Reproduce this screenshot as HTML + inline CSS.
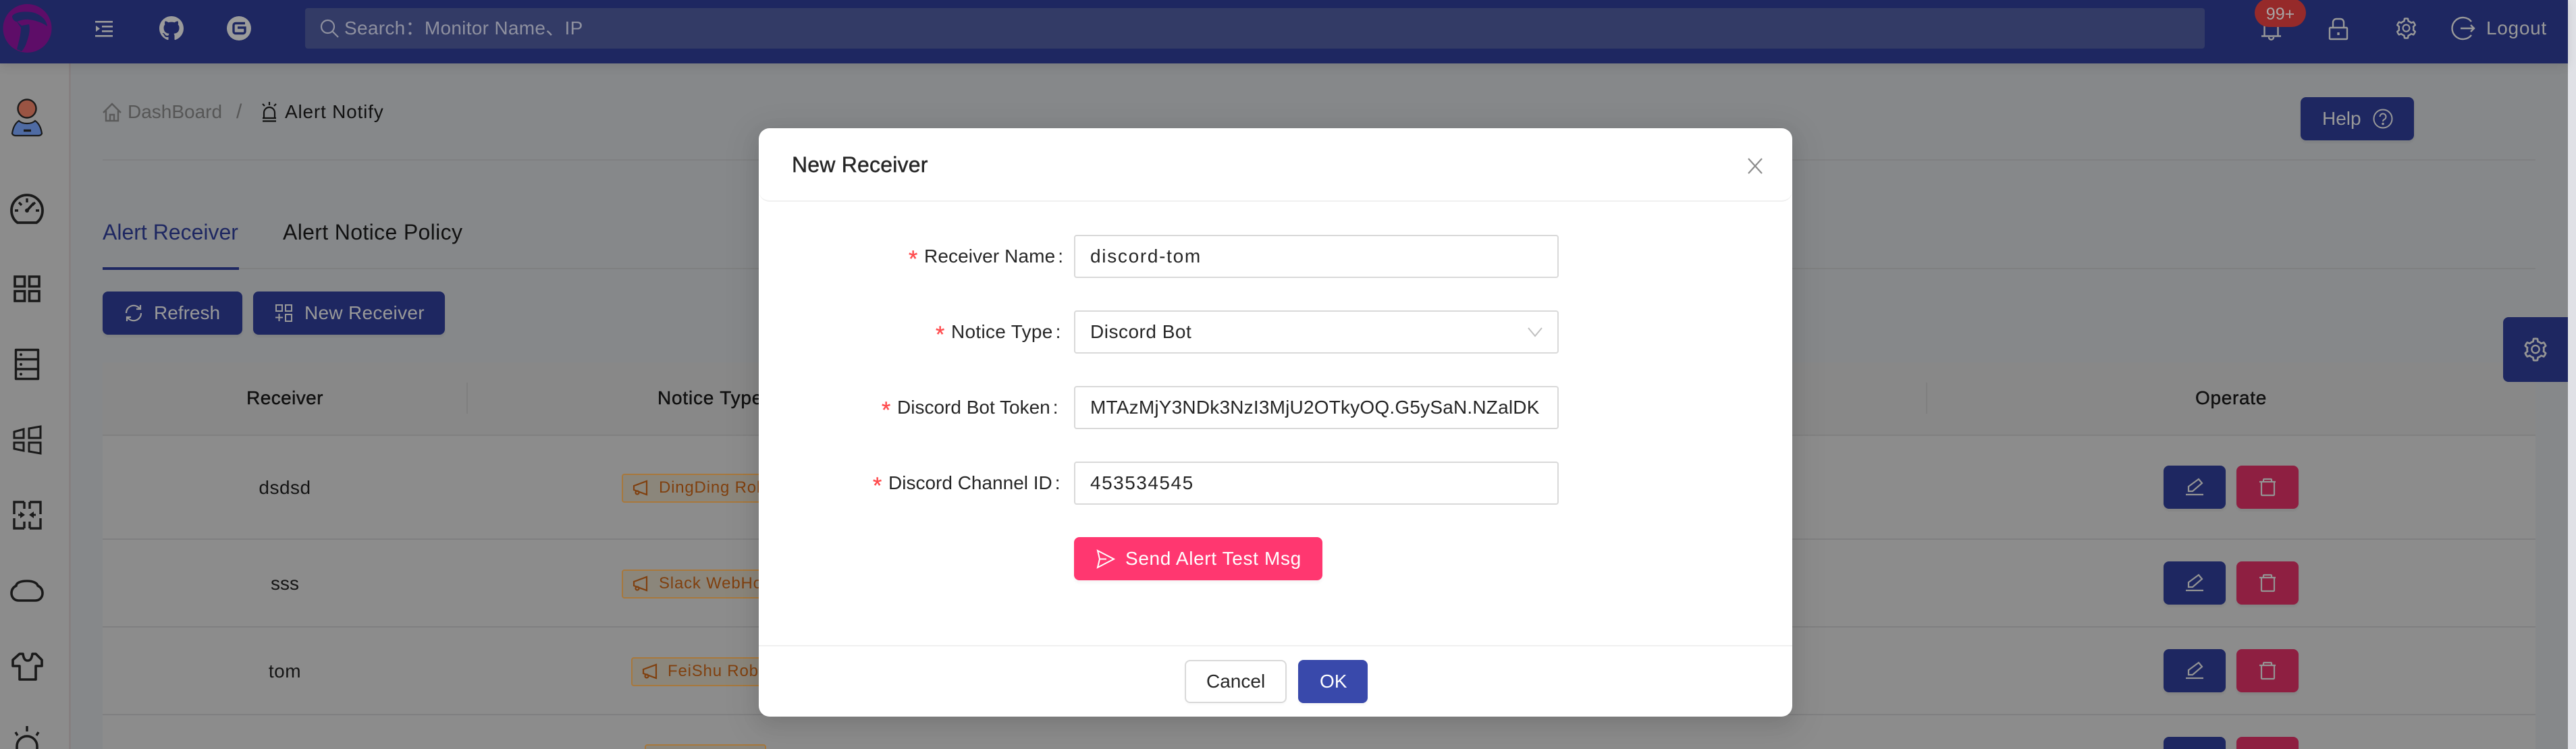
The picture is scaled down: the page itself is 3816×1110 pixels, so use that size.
<!DOCTYPE html>
<html><head><meta charset="utf-8"><title>Alert Notify</title>
<style>
html,body{margin:0;padding:0;width:3816px;height:1110px;overflow:hidden;background:#86888a}
body{position:relative;font-family:"Liberation Sans","Noto Sans CJK SC",sans-serif;font-size:28px}
div,svg{position:absolute;box-sizing:border-box}
.t{position:absolute;white-space:nowrap;line-height:40px;height:40px;font-size:28px}
.m{-webkit-text-stroke:.45px currentColor}
.c{transform:translateX(-50%)}
.line{background:#7f7f80;height:2px}
.blue{background:#1e2761;border-radius:8px;box-shadow:0 3px 3px rgba(0,0,0,.06)}
.red{background:#8e1f41;border-radius:8px;box-shadow:0 3px 3px rgba(0,0,0,.06)}
.tag{background:#8b867b;border:2px solid #a8783c;border-radius:4px;height:43px;width:300px}
.tt{color:#80400f;font-size:24px;letter-spacing:.8px}
.inp{left:1591px;width:718px;height:64px;background:#fff;border:2px solid #d9d9d9;border-radius:4px}
.v{color:#262626}
.star{color:#ff4d4f;font-size:34px;-webkit-text-stroke:.4px #ff4d4f}
.lab{color:#262626}
</style></head><body>

<!-- page areas -->
<div style="left:0;top:94px;width:102px;height:1016px;background:#8c8c8c"></div>
<div style="left:102px;top:94px;width:3px;height:1016px;background:#857f80"></div>
<div style="left:105px;top:94px;width:3699px;height:1016px;background:#86888a"></div>
<div style="left:3804px;top:0;width:12px;height:1110px;background:#e0e1e6"></div>

<!-- breadcrumb -->
<svg style="left:150px;top:150px" width="32" height="32" viewBox="0 0 32 32" fill="none" stroke="#5a5a5a" stroke-width="2.4"><path d="M3 17 16 4l13 13M7 14v15h18V14M13 29v-9h6v9"/></svg>
<div class="t" style="left:189px;top:146px;color:#565656">DashBoard</div>
<div class="t" style="left:350px;top:146px;color:#565656;font-size:30px">/</div>
<svg style="left:386px;top:150px" width="26" height="32" viewBox="0 0 26 32" fill="none" stroke="#111" stroke-width="2.2"><path d="M13 1v5M3 4l3 3M23 4l-3 3M5 25V17a8 8 0 0 1 16 0v8M3 25h20M3 29.500h20"/></svg>
<div class="t" style="left:422px;top:146px;color:#111;letter-spacing:.8px">Alert Notify</div>
<div class="line" style="left:152px;top:236px;width:3604px;background:#7f8082"></div>
<div class="blue" style="left:3408px;top:144px;width:168px;height:64px"></div>
<div class="t" style="left:3440px;top:156px;color:#999">Help</div>
<svg style="left:3515px;top:161px" width="30" height="30" viewBox="0 0 30 30" fill="none" stroke="#999" stroke-width="2"><circle cx="15" cy="15" r="13.500"/><path d="M10.500 12a4.500 4.500 0 1 1 6.500 4c-1.500.8-2 1.500-2 3"/><circle cx="15" cy="22.500" r=".8" fill="#999"/></svg>

<!-- tabs -->
<div class="t" style="left:152px;top:324px;color:#1e2761;font-size:32px">Alert Receiver</div>
<div class="t" style="left:419px;top:324px;color:#111;font-size:32px;letter-spacing:.35px">Alert Notice Policy</div>
<div style="left:152px;top:397px;width:3604px;height:2px;background:#7f8081"></div>
<div style="left:152px;top:396px;width:202px;height:4px;background:#1e2761"></div>

<div class="blue" style="left:152px;top:432px;width:207px;height:64px"></div>
<svg style="left:183px;top:449px" width="30" height="30" viewBox="0 0 30 30" fill="none" stroke="#999" stroke-width="2.2"><path d="M4 15A11 11 0 0 1 24 8.500M26 15A11 11 0 0 1 6 21.500"/><path d="M25 3v6h-6M5 27v-6h6"/></svg>
<div class="t" style="left:228px;top:444px;color:#999">Refresh</div>
<div class="blue" style="left:375px;top:432px;width:284px;height:64px"></div>
<svg style="left:407px;top:450px" width="28" height="28" viewBox="0 0 28 28" fill="none" stroke="#999" stroke-width="2"><path d="M2 2h9v9H2zM16 2h9v9h-9zM16 16h9v10h-9zM6.500 15v11M1 20.500h11"/></svg>
<div class="t" style="left:451px;top:444px;color:#999;letter-spacing:.3px">New Receiver</div>

<!-- table -->
<div style="left:152px;top:537px;width:3604px;height:108px;background:#888888"></div>
<div style="left:152px;top:645px;width:3604px;height:465px;background:#8c8c8c"></div>
<div style="left:691px;top:567px;width:2px;height:46px;background:#7f7f7f"></div>
<div style="left:2853px;top:567px;width:2px;height:46px;background:#7f7f7f"></div>
<div class="line" style="left:152px;top:644px;width:3604px;background:#808080"></div>
<div class="line" style="left:152px;top:798px;width:3604px"></div>
<div class="line" style="left:152px;top:928px;width:3604px"></div>
<div class="line" style="left:152px;top:1058px;width:3604px"></div>
<div class="t c m" style="left:422px;top:570px;color:#111;letter-spacing:.4px">Receiver</div>
<div class="t m" style="left:974px;top:570px;color:#111;letter-spacing:.8px">Notice Type</div>
<div class="t c m" style="left:3305px;top:570px;color:#111;letter-spacing:.7px">Operate</div>
<div class="t c" style="left:422px;top:703px;color:#151515;letter-spacing:.5px">dsdsd</div>
<div class="t c" style="left:422px;top:845px;color:#151515">sss</div>
<div class="t c" style="left:422px;top:975px;color:#151515;letter-spacing:.5px">tom</div>

<div class="tag" style="left:921px;top:702px"></div>
<div class="t tt" style="left:976px;top:703px">DingDing Robot</div>
<div class="tag" style="left:921px;top:844px"></div>
<div class="t tt" style="left:976px;top:845px">Slack WebHook</div>
<div class="tag" style="left:935px;top:974px"></div>
<div class="t tt" style="left:989px;top:975px">FeiShu Robot</div>
<div class="tag" style="left:955px;top:1103px;width:180px"></div>
<svg style="left:936px;top:711px" width="26" height="26" viewBox="0 0 26 26" fill="none" stroke="#80400f" stroke-width="2.200"><path d="M22 2v20L3 15V9z"/><circle cx="8" cy="19" r="2.500"/></svg>
<svg style="left:936px;top:853px" width="26" height="26" viewBox="0 0 26 26" fill="none" stroke="#80400f" stroke-width="2.200"><path d="M22 2v20L3 15V9z"/><circle cx="8" cy="19" r="2.500"/></svg>
<svg style="left:950px;top:983px" width="26" height="26" viewBox="0 0 26 26" fill="none" stroke="#80400f" stroke-width="2.200"><path d="M22 2v20L3 15V9z"/><circle cx="8" cy="19" r="2.500"/></svg>

<!-- row actions -->
<div class="blue" style="left:3205px;top:690px;width:92px;height:64px"></div>
<div class="red" style="left:3313px;top:690px;width:92px;height:64px"></div>
<div class="blue" style="left:3205px;top:832px;width:92px;height:64px"></div>
<div class="red" style="left:3313px;top:832px;width:92px;height:64px"></div>
<div class="blue" style="left:3205px;top:962px;width:92px;height:64px"></div>
<div class="red" style="left:3313px;top:962px;width:92px;height:64px"></div>
<div class="blue" style="left:3205px;top:1092px;width:92px;height:64px"></div>
<div class="red" style="left:3313px;top:1092px;width:92px;height:64px"></div>
<svg style="left:0;top:0" width="3816" height="1110" fill="none" stroke="#949494" stroke-width="2.200">
 <g><path d="M3238 733h26M3242 728v-7l15-11 5 6-14 12z"/><path d="M3347 714h24M3350 714v19a1 1 0 0 0 1 1h17a1 1 0 0 0 1-1v-19M3353 714v-3a1 1 0 0 1 1-1h10a1 1 0 0 1 1 1v3"/></g>
 <g transform="translate(0,142)"><path d="M3238 733h26M3242 728v-7l15-11 5 6-14 12z"/><path d="M3347 714h24M3350 714v19a1 1 0 0 0 1 1h17a1 1 0 0 0 1-1v-19M3353 714v-3a1 1 0 0 1 1-1h10a1 1 0 0 1 1 1v3"/></g>
 <g transform="translate(0,272)"><path d="M3238 733h26M3242 728v-7l15-11 5 6-14 12z"/><path d="M3347 714h24M3350 714v19a1 1 0 0 0 1 1h17a1 1 0 0 0 1-1v-19M3353 714v-3a1 1 0 0 1 1-1h10a1 1 0 0 1 1 1v3"/></g>
</svg>

<!-- floating settings -->
<div style="left:3708px;top:470px;width:96px;height:96px;background:#1e2761;border-radius:8px 0 0 8px"></div>
<svg style="left:3736px;top:498px" width="40" height="40" viewBox="0 0 1024 1024" fill="#949494"><path d="M924.800 625.700l-65.500-56c3.100-19 4.700-38.400 4.700-57.800s-1.600-38.800-4.700-57.800l65.500-56a32.030 32.030 0 0 0 9.300-35.200l-.9-2.600a443.740 443.740 0 0 0-79.700-137.900l-1.800-2.100a32.120 32.120 0 0 0-35.100-9.500l-81.300 28.900c-30-24.600-63.500-44-99.700-57.600l-15.700-85a32.050 32.050 0 0 0-25.800-25.700l-2.700-.5c-52.100-9.400-106.900-9.400-159 0l-2.700.5a32.050 32.050 0 0 0-25.800 25.700l-15.800 85.400a351.860 351.860 0 0 0-99 57.400l-81.900-29.100a32 32 0 0 0-35.100 9.500l-1.800 2.100a446.020 446.020 0 0 0-79.700 137.900l-.9 2.600c-4.500 12.500-.8 26.500 9.300 35.200l66.300 56.600c-3.100 18.800-4.600 38-4.600 57.100 0 19.200 1.500 38.400 4.600 57.100L99 625.500a32.030 32.030 0 0 0-9.300 35.200l.9 2.600c18.100 50.400 44.900 96.900 79.700 137.900l1.800 2.100a32.120 32.120 0 0 0 35.100 9.500l81.900-29.100c29.800 24.500 63.100 43.900 99 57.400l15.800 85.400a32.050 32.050 0 0 0 25.800 25.700l2.700.5a449.400 449.400 0 0 0 159 0l2.700-.5a32.050 32.050 0 0 0 25.800-25.700l15.700-85a350 350 0 0 0 99.700-57.600l81.300 28.900a32 32 0 0 0 35.100-9.500l1.800-2.100c34.800-41.100 61.600-87.500 79.700-137.900l.9-2.600c4.500-12.300.8-26.300-9.300-35zM788.300 465.900c2.500 15.100 3.800 30.600 3.800 46.100s-1.300 31-3.800 46.100l-6.600 40.100 74.700 63.900a370.030 370.030 0 0 1-42.600 73.600L721 702.800l-31.400 25.800c-23.900 19.600-50.500 35-79.300 45.800l-38.100 14.300-17.900 97a377.500 377.500 0 0 1-85 0l-17.900-97.200-37.800-14.500c-28.500-10.800-55-26.200-78.700-45.700l-31.400-25.900-93.400 33.200c-17-22.900-31.200-47.600-42.600-73.600l75.500-64.500-6.500-40c-2.400-14.900-3.700-30.300-3.700-45.500 0-15.300 1.200-30.600 3.700-45.500l6.500-40-75.500-64.500c11.300-26.100 25.600-50.700 42.600-73.600l93.400 33.200 31.400-25.900c23.700-19.500 50.200-34.900 78.700-45.700l37.900-14.300 17.900-97.200c28.100-3.200 56.800-3.200 85 0l17.900 97 38.100 14.300c28.700 10.800 55.400 26.200 79.300 45.800l31.400 25.800 92.800-32.900c17 22.900 31.200 47.600 42.600 73.600L781.800 426l6.500 39.900zM512 326c-97.200 0-176 78.800-176 176s78.800 176 176 176 176-78.800 176-176-78.800-176-176-176zm79.200 255.200A111.600 111.600 0 0 1 512 614c-29.900 0-58-11.700-79.200-32.800A111.600 111.600 0 0 1 400 502c0-29.900 11.700-58 32.800-79.200C454 401.600 482.100 390 512 390c29.900 0 58 11.600 79.200 32.800A111.600 111.600 0 0 1 624 502c0 29.900-11.700 58-32.800 79.200z"/></svg>

<!-- sidebar icons -->
<svg style="left:0;top:94px" width="102" height="1016" viewBox="0 94 102 1016" fill="none" stroke="#1a1a1a" stroke-width="3">
 <circle cx="40" cy="161" r="13.500" fill="#9a5443" stroke-width="2.400"/>
 <path d="M18 198c1-7 4-15 10-19 3 3 7 4 12 4s9-1 12-4c6 4 9 12 10 19-1 2-3 3-5 3H23c-2 0-4-1-5-3z" fill="#4f6ba3" stroke-width="2.200"/>
 <path d="M35 193.500h11" stroke-width="3.400"/>
 <path d="M26 330c-6-4-9-11-9-18a23 23 0 0 1 46 0c0 7-3 14-9 18z" stroke-width="3.800" stroke-linejoin="round"/>
 <path d="M40 294v6M28 300l4 4M52 300l-4 4M22 312h5M53 312h5" stroke-width="3.400"/>
 <path d="M40 312l10-11" stroke-width="3.600"/>
 <circle cx="40" cy="312" r="3" fill="#1a1a1a" stroke="none"/>
 <path d="M22 410h14.500v14.500H22zM43.500 410H58v14.500H43.500zM22 431.500h14.500V446H22zM43.500 431.500H58V446H43.500z" stroke-width="3.600"/>
 <path d="M23.500 518.500h33v43h-33zM23.500 532.500h33M23.500 547h33" stroke-width="3.400" stroke-linejoin="round"/>
 <circle cx="31" cy="525.500" r="2" fill="#1a1a1a" stroke="none"/><circle cx="31" cy="540" r="2" fill="#1a1a1a" stroke="none"/><circle cx="31" cy="554.500" r="2" fill="#1a1a1a" stroke="none"/>
 <path d="M21 640l14-4v13H21zM43 635l17-3v17H43zM21 656h14v12l-14-3zM43 656h17v16l-17-3z" stroke-width="3"/>
 <path d="M36 744H21v18M36 783H21v-15M44 744h16v18M44 783h16v-15M36 744v10M36 783v-10M44 744v10M44 783v-10" stroke-width="3.400"/>
 <path d="M27 763h8M53 763h-8" stroke-width="3"/>
 <path d="M30 758l7 5-7 5zM50 758l-7 5 7 5z" fill="#1a1a1a" stroke="none"/>
 <path d="M28 890c-8 0-11-6-11-11 0-6 3-9 7-11 0-4 6-7 16-7 9 0 15 3 16 7 4 2 7 5 7 11 0 5-3 11-11 11z" stroke-width="3.600"/>
 <path d="M19 978l10-9h5c1 7 3 10 7 10s6-3 7-10h5l9 9v9l-9 0v20H29v-20h-10z" stroke-width="3.600" stroke-linejoin="round"/>
 <path d="M40 1076v8M23 1085l3 5M57 1085l-3 5" stroke-width="3.400"/>
 <path d="M25 1120v-14a15 15 0 0 1 30 0v14" stroke-width="3.600"/>
</svg>

<!-- header -->
<div style="left:0;top:0;width:3804px;height:94px;background:#1e2761;box-shadow:0 4px 14px rgba(0,0,0,.1)"></div>
<svg style="left:0;top:0" width="90" height="94" viewBox="0 0 90 94">
 <circle cx="40.500" cy="42" r="36" fill="#5e0d68"/>
 <path d="M18 24c4-7 22-8 33-5 11 4 18 11 19 20-6-5-18-9-27-10-8-1-14 2-18 3-4 0-7-4-7-8z" fill="#1e2761"/>
 <path d="M24 31l8 7 11-2c2 8 0 17-3 25-2 7-5 12-8 15l-7-3c3-12 6-22 6-32l-7-10z" fill="#1e2761"/>
</svg>
<svg style="left:140px;top:29px" width="28" height="26" viewBox="0 0 28 26" fill="#9b9b9b"><rect x="1" y="2" width="26" height="2.600"/><rect x="11" y="9" width="16" height="2.600"/><rect x="11" y="16" width="16" height="2.600"/><rect x="1" y="23" width="26" height="2.600"/><path d="M2 9l6 4.500-6 4.500z"/></svg>
<svg style="left:236px;top:24px" width="36" height="36" viewBox="0 0 16 16" fill="#9b9b9b"><path d="M8 0C3.580 0 0 3.580 0 8c0 3.540 2.290 6.530 5.470 7.590.4.070.55-.17.55-.38 0-.19-.01-.82-.01-1.490-2.010.37-2.530-.49-2.690-.94-.09-.23-.48-.94-.82-1.130-.28-.15-.68-.52-.01-.53.63-.01 1.080.58 1.230.82.72 1.210 1.870.87 2.330.66.07-.52.28-.87.51-1.070-1.780-.2-3.640-.89-3.640-3.950 0-.87.31-1.590.82-2.150-.08-.2-.36-1.020.08-2.120 0 0 .67-.21 2.200.82.64-.18 1.320-.27 2-.27s1.360.09 2 .27c1.530-1.040 2.200-.82 2.200-.82.44 1.100.16 1.920.08 2.120.51.56.82 1.270.82 2.150 0 3.070-1.870 3.750-3.650 3.950.29.25.54.73.54 1.480 0 1.070-.01 1.930-.01 2.200 0 .21.15.46.55.38A8.010 8.010 0 0 0 16 8c0-4.420-3.580-8-8-8z"/></svg>
<svg style="left:336px;top:24px" width="36" height="36" viewBox="0 0 36 36"><circle cx="18" cy="18" r="18" fill="#9b9b9b"/><path d="M27 10.500H13a3 3 0 0 0-3 3v9a3 3 0 0 0 3 3h11a3 3 0 0 0 3-3V17H16" fill="none" stroke="#1e2761" stroke-width="3.400"/></svg>

<div style="left:452px;top:12px;width:2814px;height:60px;background:#333b66;border-radius:4px"></div>
<svg style="left:474px;top:28px" width="28" height="28" viewBox="0 0 28 28" fill="none" stroke="#8e909f" stroke-width="2.200"><circle cx="11.500" cy="11.500" r="9.500"/><path d="M18.500 18.500 27 27"/></svg>
<div class="t" style="left:510px;top:22px;color:#8e909f;letter-spacing:.3px">Search：Monitor Name、IP</div>

<!-- header right -->
<svg style="left:3348px;top:28px" width="34" height="32" viewBox="0 0 34 32" fill="none" stroke="#999" stroke-width="2.400"><path d="M2 25.500h29M6.500 25V6M26.500 25V6M13 27c0 5 7 5 7 0"/></svg>
<div style="left:3340px;top:-2px;width:76px;height:42px;border-radius:21px;background:#962a2a"></div>
<div class="t c" style="left:3378px;top:1px;color:#a9a5a5;font-size:25px">99+</div>
<svg style="left:3449px;top:26px" width="30" height="34" viewBox="0 0 30 34" fill="none" stroke="#999" stroke-width="2.400"><rect x="2" y="15" width="26" height="17" rx="1"/><path d="M7 15V7a5 5 0 0 1 5-5h6a5 5 0 0 1 5 5v8"/><path d="M15 22v4" stroke-width="3.400"/></svg>
<svg style="left:3547px;top:24px" width="35" height="36" viewBox="0 0 1024 1024" preserveAspectRatio="none" fill="#999"><path d="M924.800 625.700l-65.500-56c3.100-19 4.700-38.400 4.700-57.800s-1.600-38.800-4.700-57.800l65.500-56a32.030 32.030 0 0 0 9.300-35.200l-.9-2.600a443.740 443.740 0 0 0-79.700-137.900l-1.800-2.100a32.120 32.120 0 0 0-35.100-9.500l-81.300 28.900c-30-24.600-63.500-44-99.700-57.600l-15.700-85a32.050 32.050 0 0 0-25.800-25.700l-2.700-.5c-52.100-9.400-106.900-9.400-159 0l-2.700.5a32.050 32.050 0 0 0-25.800 25.700l-15.800 85.400a351.860 351.860 0 0 0-99 57.400l-81.900-29.100a32 32 0 0 0-35.100 9.500l-1.800 2.100a446.020 446.020 0 0 0-79.700 137.900l-.9 2.600c-4.500 12.500-.8 26.500 9.300 35.200l66.300 56.600c-3.100 18.800-4.600 38-4.600 57.100 0 19.200 1.500 38.400 4.600 57.100L99 625.500a32.030 32.030 0 0 0-9.300 35.200l.9 2.600c18.100 50.400 44.900 96.900 79.700 137.900l1.800 2.100a32.120 32.120 0 0 0 35.100 9.500l81.900-29.100c29.800 24.500 63.100 43.900 99 57.400l15.800 85.400a32.050 32.050 0 0 0 25.800 25.700l2.700.5a449.400 449.400 0 0 0 159 0l2.700-.5a32.050 32.050 0 0 0 25.800-25.700l15.700-85a350 350 0 0 0 99.700-57.600l81.300 28.900a32 32 0 0 0 35.100-9.500l1.800-2.100c34.800-41.100 61.600-87.500 79.700-137.900l.9-2.600c4.500-12.300.8-26.300-9.300-35zM788.300 465.900c2.500 15.100 3.800 30.600 3.800 46.100s-1.300 31-3.800 46.100l-6.600 40.100 74.700 63.900a370.030 370.030 0 0 1-42.600 73.600L721 702.800l-31.400 25.800c-23.900 19.600-50.500 35-79.300 45.800l-38.100 14.300-17.900 97a377.500 377.500 0 0 1-85 0l-17.900-97.200-37.800-14.500c-28.500-10.800-55-26.200-78.700-45.700l-31.400-25.900-93.400 33.200c-17-22.900-31.200-47.600-42.600-73.600l75.500-64.500-6.500-40c-2.400-14.900-3.700-30.300-3.700-45.500 0-15.300 1.200-30.600 3.700-45.500l6.500-40-75.500-64.500c11.300-26.100 25.600-50.700 42.600-73.600l93.400 33.200 31.400-25.900c23.700-19.500 50.200-34.900 78.700-45.700l37.900-14.300 17.900-97.200c28.100-3.200 56.800-3.200 85 0l17.900 97 38.100 14.300c28.700 10.800 55.400 26.200 79.300 45.800l31.400 25.800 92.800-32.900c17 22.900 31.200 47.600 42.600 73.600L781.800 426l6.500 39.900zM512 326c-97.200 0-176 78.800-176 176s78.800 176 176 176 176-78.800 176-176-78.800-176-176-176zm79.200 255.200A111.600 111.600 0 0 1 512 614c-29.900 0-58-11.700-79.200-32.800A111.600 111.600 0 0 1 400 502c0-29.900 11.700-58 32.800-79.200C454 401.600 482.100 390 512 390c29.900 0 58 11.600 79.200 32.800A111.600 111.600 0 0 1 624 502c0 29.900-11.700 58-32.800 79.200z"/></svg>
<svg style="left:3630px;top:24px" width="38" height="36" viewBox="0 0 38 36" fill="none" stroke="#999" stroke-width="2.400"><path d="M31 8A16 16 0 1 0 31 28M15 18h20M30 13l5 5-5 5"/></svg>
<div class="t" style="left:3683px;top:22px;color:#999;letter-spacing:.7px">Logout</div>

<!-- modal -->
<div style="left:1124px;top:190px;width:1531px;height:872px;background:#fff;border-radius:16px;box-shadow:0 9px 28px rgba(0,0,0,.1),0 12px 48px 16px rgba(0,0,0,.05)"></div>
<div style="left:1124px;top:190px;width:1531px;height:109px;border-bottom:2px solid #f0f0f0;border-radius:16px"></div>
<div class="t m" style="left:1173px;top:224px;color:#262626;font-size:32px;letter-spacing:.2px">New Receiver</div>
<svg style="left:2588px;top:233px" width="24" height="26" viewBox="0 0 24 26" fill="none" stroke="#8c8c8c" stroke-width="2.200"><path d="M2 2l20 22M22 2 2 24"/></svg>

<div class="inp" style="top:348px"></div>
<div class="inp" style="top:460px"></div>
<div class="inp" style="top:572px"></div>
<div class="inp" style="top:684px"></div>

<div class="t star" style="left:1346px;top:364px">*</div>
<div class="t lab" style="left:1369px;top:360px;letter-spacing:.1px">Receiver Name<span style="margin-left:4px">:</span></div>
<div class="t star" style="left:1386px;top:476px">*</div>
<div class="t lab" style="left:1409px;top:472px;letter-spacing:.3px">Notice Type<span style="margin-left:4px">:</span></div>
<div class="t star" style="left:1306px;top:588px">*</div>
<div class="t lab" style="left:1329px;top:584px">Discord Bot Token<span style="margin-left:4px">:</span></div>
<div class="t star" style="left:1293px;top:700px">*</div>
<div class="t lab" style="left:1316px;top:696px">Discord Channel ID<span style="margin-left:4px">:</span></div>

<div class="t v" style="left:1615px;top:360px;letter-spacing:1.7px">discord-tom</div>
<div class="t v" style="left:1615px;top:472px;letter-spacing:.5px">Discord Bot</div>
<svg style="left:2262px;top:484px" width="24" height="16" viewBox="0 0 24 16" fill="none" stroke="#bfbfbf" stroke-width="2"><path d="M2 2l10 12L22 2"/></svg>
<div class="t v" style="left:1615px;top:584px;letter-spacing:.2px">MTAzMjY3NDk3NzI3MjU2OTkyOQ.G5ySaN.NZalDK</div>
<div class="t v" style="left:1615px;top:696px;letter-spacing:1.5px">453534545</div>

<div style="left:1591px;top:796px;width:368px;height:64px;background:#ff3770;border-radius:8px;box-shadow:0 4px 4px rgba(0,0,0,.04)"></div>
<svg style="left:1623px;top:814px" width="29" height="29" viewBox="0 0 29 29" fill="none" stroke="#fff" stroke-width="2"><path d="M3 2l24 12.500L3 27l3-12.500zM6 14.500h10"/></svg>
<div class="t" style="left:1667px;top:808px;color:#fff;letter-spacing:.65px">Send Alert Test Msg</div>

<div style="left:1124px;top:956px;width:1531px;height:2px;background:#f0f0f0"></div>
<div style="left:1755px;top:978px;width:151px;height:64px;background:#fff;border:2px solid #d9d9d9;border-radius:8px;box-shadow:0 3px 3px rgba(0,0,0,.02)"></div>
<div class="t" style="left:1787px;top:990px;color:#262626">Cancel</div>
<div style="left:1923px;top:978px;width:103px;height:64px;background:#3949ab;border-radius:8px;box-shadow:0 3px 3px rgba(0,0,0,.04)"></div>
<div class="t" style="left:1955px;top:990px;color:#fff">OK</div>
</body></html>
